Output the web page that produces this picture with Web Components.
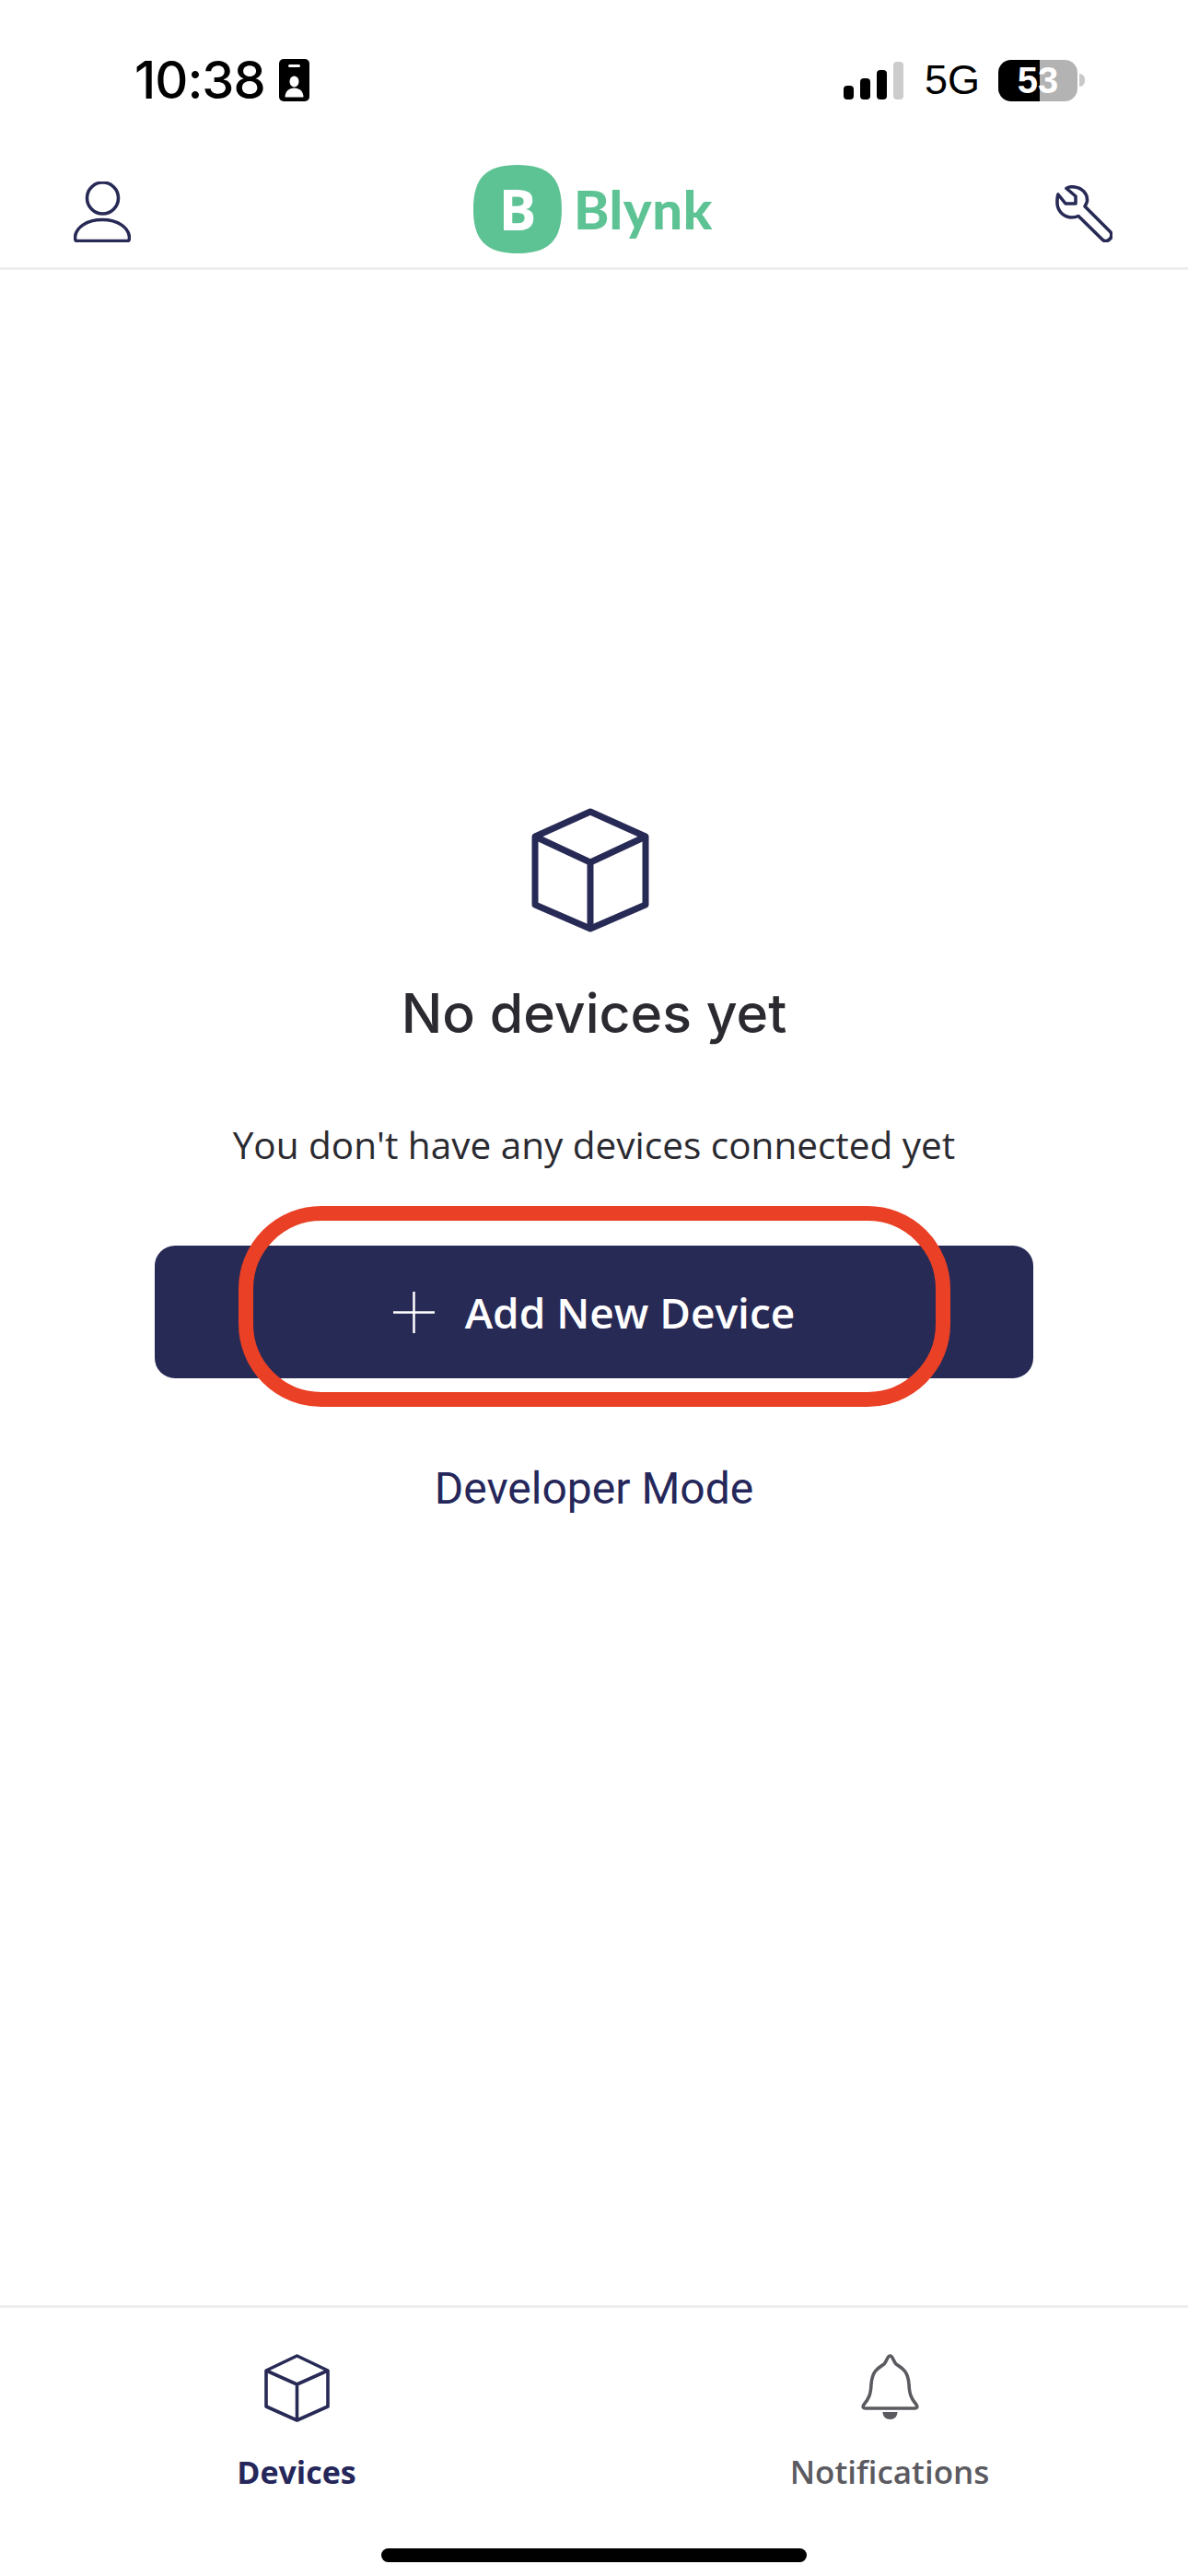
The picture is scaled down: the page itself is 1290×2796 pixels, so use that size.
<!DOCTYPE html>
<html lang="en">
<head>
<meta charset="utf-8">
<title>Blynk</title>
<style>
  html, body { margin: 0; background: #fff; }
</style>
</head>
<body>
<blynk-app>
  <status-bar slot="status" time="10:38" network="5G" battery="53"></status-bar>
  <app-header slot="header"></app-header>
  <empty-state slot="main" heading="No devices yet" message="You don't have any devices connected yet">
    <action-button>Add New Device</action-button>
    <link-text>Developer Mode</link-text>
  </empty-state>
  <tab-bar slot="tabs">
    <tab-item active label="Devices">
      <svg width="71" height="74" viewBox="0 0 71 74" fill="none" stroke="#282a56" stroke-width="3.6" stroke-linejoin="round"><path d="M35.5 2L69 18V57L35.5 72L2 57V18Z"/><path d="M2 18L35.5 33L69 18M35.5 33V72"/></svg>
    </tab-item>
    <tab-item label="Notifications">
      <svg width="63" height="71" viewBox="0 0 63 71" fill="none"><path stroke="#5a5a60" stroke-width="3.6" stroke-linejoin="round" d="M31.5 2C28.5 2 28 8 25 11C19 15 12 18 11 33C10.5 43 9 48 3 55C1.5 57.500 2 59 5 59H58C61 59 61.500 57.500 60 55C54 48 52.500 43 52 33C51 18 44 15 38 11C35 8 34.500 2 31.500 2Z"/><path fill="#5a5a60" d="M23.500 63H39.500C39.500 68 36 71 31.500 71C27 71 23.500 68 23.500 63Z"/></svg>
    </tab-item>
  </tab-bar>
</blynk-app>

<script>
const statusTemplate = document.createElement('template');
statusTemplate.innerHTML = `
<style>
  :host { display: flex; align-items: center; justify-content: space-between; height: 174px; padding: 0 112px 0 146px; box-sizing: border-box; color: #000; font-family: "Liberation Sans", sans-serif; }
  .left, .right { display: flex; align-items: center; }
  .time { font-size: 56px; line-height: 60px; font-weight: 500; font-family: Inter, sans-serif; letter-spacing: -1px; }
  .badge { margin-left: 15px; display: block; }
  .signal { display: flex; align-items: flex-end; gap: 7px; height: 41px; }
  .signal i { display: block; width: 11px; background: #000; border-radius: 4px; }
  .signal i:nth-child(1) { height: 15px; }
  .signal i:nth-child(2) { height: 23px; }
  .signal i:nth-child(3) { height: 32px; }
  .signal i:nth-child(4) { height: 41px; background: #ccc; }
  .network { font-size: 45px; line-height: 50px; margin-left: 23px; }
  .battery { margin-left: 20px; width: 86px; height: 45px; border-radius: 14px; background: linear-gradient(90deg, #000 45px, #b3b3b3 45px); color: #fff; font-size: 40px; line-height: 45px; font-weight: 700; text-align: center; }
  .nub { margin-left: 2px; width: 6px; height: 14px; border-radius: 0 7px 7px 0; background: #c8c8c8; }
</style>
<div class="left">
  <span class="time"></span>
  <svg class="badge" width="33" height="46" viewBox="0 0 33 46"><rect width="33" height="46" rx="5" fill="#000"/><rect x="10" y="6" width="13" height="3" rx="1.500" fill="#fff"/><ellipse cx="16.500" cy="24.500" rx="5" ry="6" fill="#fff"/><path fill="#fff" d="M6.500 41.500C6.500 35 11 31.500 16.500 31.500C22 31.500 26.500 35 26.500 41.500Z"/></svg>
</div>
<div class="right">
  <div class="signal"><i></i><i></i><i></i><i></i></div>
  <span class="network"></span>
  <div class="battery"></div>
  <div class="nub"></div>
</div>
`;

class StatusBar extends HTMLElement {
  constructor() {
    super();
    const root = this.attachShadow({ mode: 'open' });
    root.appendChild(statusTemplate.content.cloneNode(true));
    root.querySelector('.time').textContent = this.getAttribute('time');
    root.querySelector('.network').textContent = this.getAttribute('network');
    root.querySelector('.battery').textContent = this.getAttribute('battery');
  }
}

const headerTemplate = document.createElement('template');
headerTemplate.innerHTML = `
<style>
  :host { display: grid; grid-template-columns: 1fr auto 1fr; align-items: start; height: 119px; padding: 5px 82px 0 80px; box-sizing: border-box; border-bottom: 3px solid #eee; }
  .person { margin-top: 18px; display: block; }
  .wrench { margin-top: 22px; display: block; justify-self: end; }
  .logo { display: flex; align-items: flex-start; }
  .mark { width: 96px; height: 96px; background: #5ec394; clip-path: path("M48 0C82 0 96 14 96 48C96 82 82 96 48 96C14 96 0 82 0 48C0 14 14 0 48 0Z"); color: #fff; font: 700 61px/96px "Open Sans", sans-serif; text-align: center; }
  .word { margin: 10px 0 0 13px; color: #5ec394; font: 900 58px/76px Lato, sans-serif; letter-spacing: 0.6px; }
</style>
<svg class="person" width="62" height="66" viewBox="0 0 62 66" fill="none" stroke="#282a56" stroke-width="3.6" stroke-linejoin="round"><ellipse cx="31.500" cy="18" rx="17" ry="17"/><path d="M3.500 64.500H58.500C60 64.500 60.500 63 60.500 61C60 50 48 41.500 31 41.500C14 41.500 2 50 1.500 61C1.500 63 2 64.500 3.500 64.500Z"/></svg>
<div class="logo"><div class="mark">B</div><div class="word">Blynk</div></div>
<svg class="wrench" width="62" height="62" viewBox="0 0 62 62" fill="none" stroke="#282a56" stroke-width="3.6" stroke-linejoin="round"><path d="M3 10L11 20H22V12L12 3.500C14 2 18 1.500 21 2C29 3 35 9 34.500 17C34.500 19 33 21 32 23L60 51C61.500 54 61 57 58.500 59C56 61 53 61 51 59L25 33.500C23 34.500 20 35 17 35C8 34.500 1.500 27 2 18C2 15 2 12 3 10Z"/></svg>
`;

class AppHeader extends HTMLElement {
  constructor() {
    super();
    this.attachShadow({ mode: 'open' }).appendChild(headerTemplate.content.cloneNode(true));
  }
}

const emptyTemplate = document.createElement('template');
emptyTemplate.innerHTML = `
<style>
  :host { display: flex; flex-direction: column; align-items: center; padding-top: 584px; }
  .box { display: block; margin-left: -8px; }
  h1 { margin: 48px 0 0; color: #2a2a30; font: 500 59px/80px Inter, sans-serif; }
  p { margin: 75px 0 0; color: #2a2a30; font: 400 40.500px/56px "Open Sans", sans-serif; }
  .actions { display: flex; flex-direction: column; align-items: center; width: 954px; margin-top: 81px; }
</style>
<svg class="box" width="128" height="135" viewBox="0 0 128 135" fill="none" stroke="#282a56" stroke-width="7" stroke-linejoin="round"><path d="M64 4L124 31V105L64 131L4 105V31Z"/><path d="M4 31L64 59L124 31M64 59V131"/></svg>
<h1></h1>
<p></p>
<div class="actions"><slot></slot></div>
`;

class EmptyState extends HTMLElement {
  constructor() {
    super();
    const root = this.attachShadow({ mode: 'open' });
    root.appendChild(emptyTemplate.content.cloneNode(true));
    root.querySelector('h1').textContent = this.getAttribute('heading');
    root.querySelector('p').textContent = this.getAttribute('message');
  }
}

const buttonTemplate = document.createElement('template');
buttonTemplate.innerHTML = `
<style>
  :host { display: flex; position: relative; align-items: center; justify-content: center; gap: 33px; width: 954px; height: 144px; border-radius: 22px; background: #282a56; color: #fff; font: 600 46px/60px "Open Sans", sans-serif; }
  .ring { position: absolute; left: 91px; top: -43px; width: 773px; height: 218px; box-sizing: border-box; border: 16px solid #ea4025; border-radius: 90px; }
</style>
<svg width="45" height="45" viewBox="0 0 45 45" stroke="#fff" stroke-width="2.500"><path d="M22.500 0V45M0 22.500H45"/></svg>
<slot></slot>
<div class="ring"></div>
`;

class ActionButton extends HTMLElement {
  constructor() {
    super();
    this.attachShadow({ mode: 'open' }).appendChild(buttonTemplate.content.cloneNode(true));
  }
}

const linkTemplate = document.createElement('template');
linkTemplate.innerHTML = `
<style>
  :host { display: block; margin-top: 90px; color: #25275a; font: 400 48px/60px Roboto, sans-serif; }
</style>
<slot></slot>
`;

class LinkText extends HTMLElement {
  constructor() {
    super();
    this.attachShadow({ mode: 'open' }).appendChild(linkTemplate.content.cloneNode(true));
  }
}

const tabBarTemplate = document.createElement('template');
tabBarTemplate.innerHTML = `
<style>
  :host { display: flex; flex-direction: column; height: 294px; box-sizing: border-box; border-top: 3px solid #eee; }
  .row { display: grid; grid-template-columns: 1fr 1fr; padding: 50px 2px 0 0; }
  .home { width: 462px; height: 15px; margin: 61px auto 0; border-radius: 8px; background: #000; }
</style>
<div class="row"><slot></slot></div>
<div class="home"></div>
`;

class TabBar extends HTMLElement {
  constructor() {
    super();
    this.attachShadow({ mode: 'open' }).appendChild(tabBarTemplate.content.cloneNode(true));
  }
}

const tabItemTemplate = document.createElement('template');
tabItemTemplate.innerHTML = `
<style>
  :host { display: flex; flex-direction: column; align-items: center; color: #5a5a60; font: 600 35px/44px "Open Sans", sans-serif; }
  :host([active]) { color: #25275a; font-weight: 700; font-size: 34px; }
  .icon { height: 74px; }
  .label { margin-top: 32px; }
</style>
<div class="icon"><slot></slot></div>
<div class="label"></div>
`;

class TabItem extends HTMLElement {
  constructor() {
    super();
    const root = this.attachShadow({ mode: 'open' });
    root.appendChild(tabItemTemplate.content.cloneNode(true));
    root.querySelector('.label').textContent = this.getAttribute('label');
  }
}

const appTemplate = document.createElement('template');
appTemplate.innerHTML = `
<style>
  :host { display: flex; flex-direction: column; width: 1290px; height: 2796px; overflow: hidden; background: #fff; }
  .main { flex: 1; }
</style>
<slot name="status"></slot>
<slot name="header"></slot>
<div class="main"><slot name="main"></slot></div>
<slot name="tabs"></slot>
`;

class BlynkApp extends HTMLElement {
  constructor() {
    super();
    this.attachShadow({ mode: 'open' }).appendChild(appTemplate.content.cloneNode(true));
  }
}

customElements.define('status-bar', StatusBar);
customElements.define('app-header', AppHeader);
customElements.define('action-button', ActionButton);
customElements.define('link-text', LinkText);
customElements.define('empty-state', EmptyState);
customElements.define('tab-item', TabItem);
customElements.define('tab-bar', TabBar);
customElements.define('blynk-app', BlynkApp);
</script>
</body>
</html>
